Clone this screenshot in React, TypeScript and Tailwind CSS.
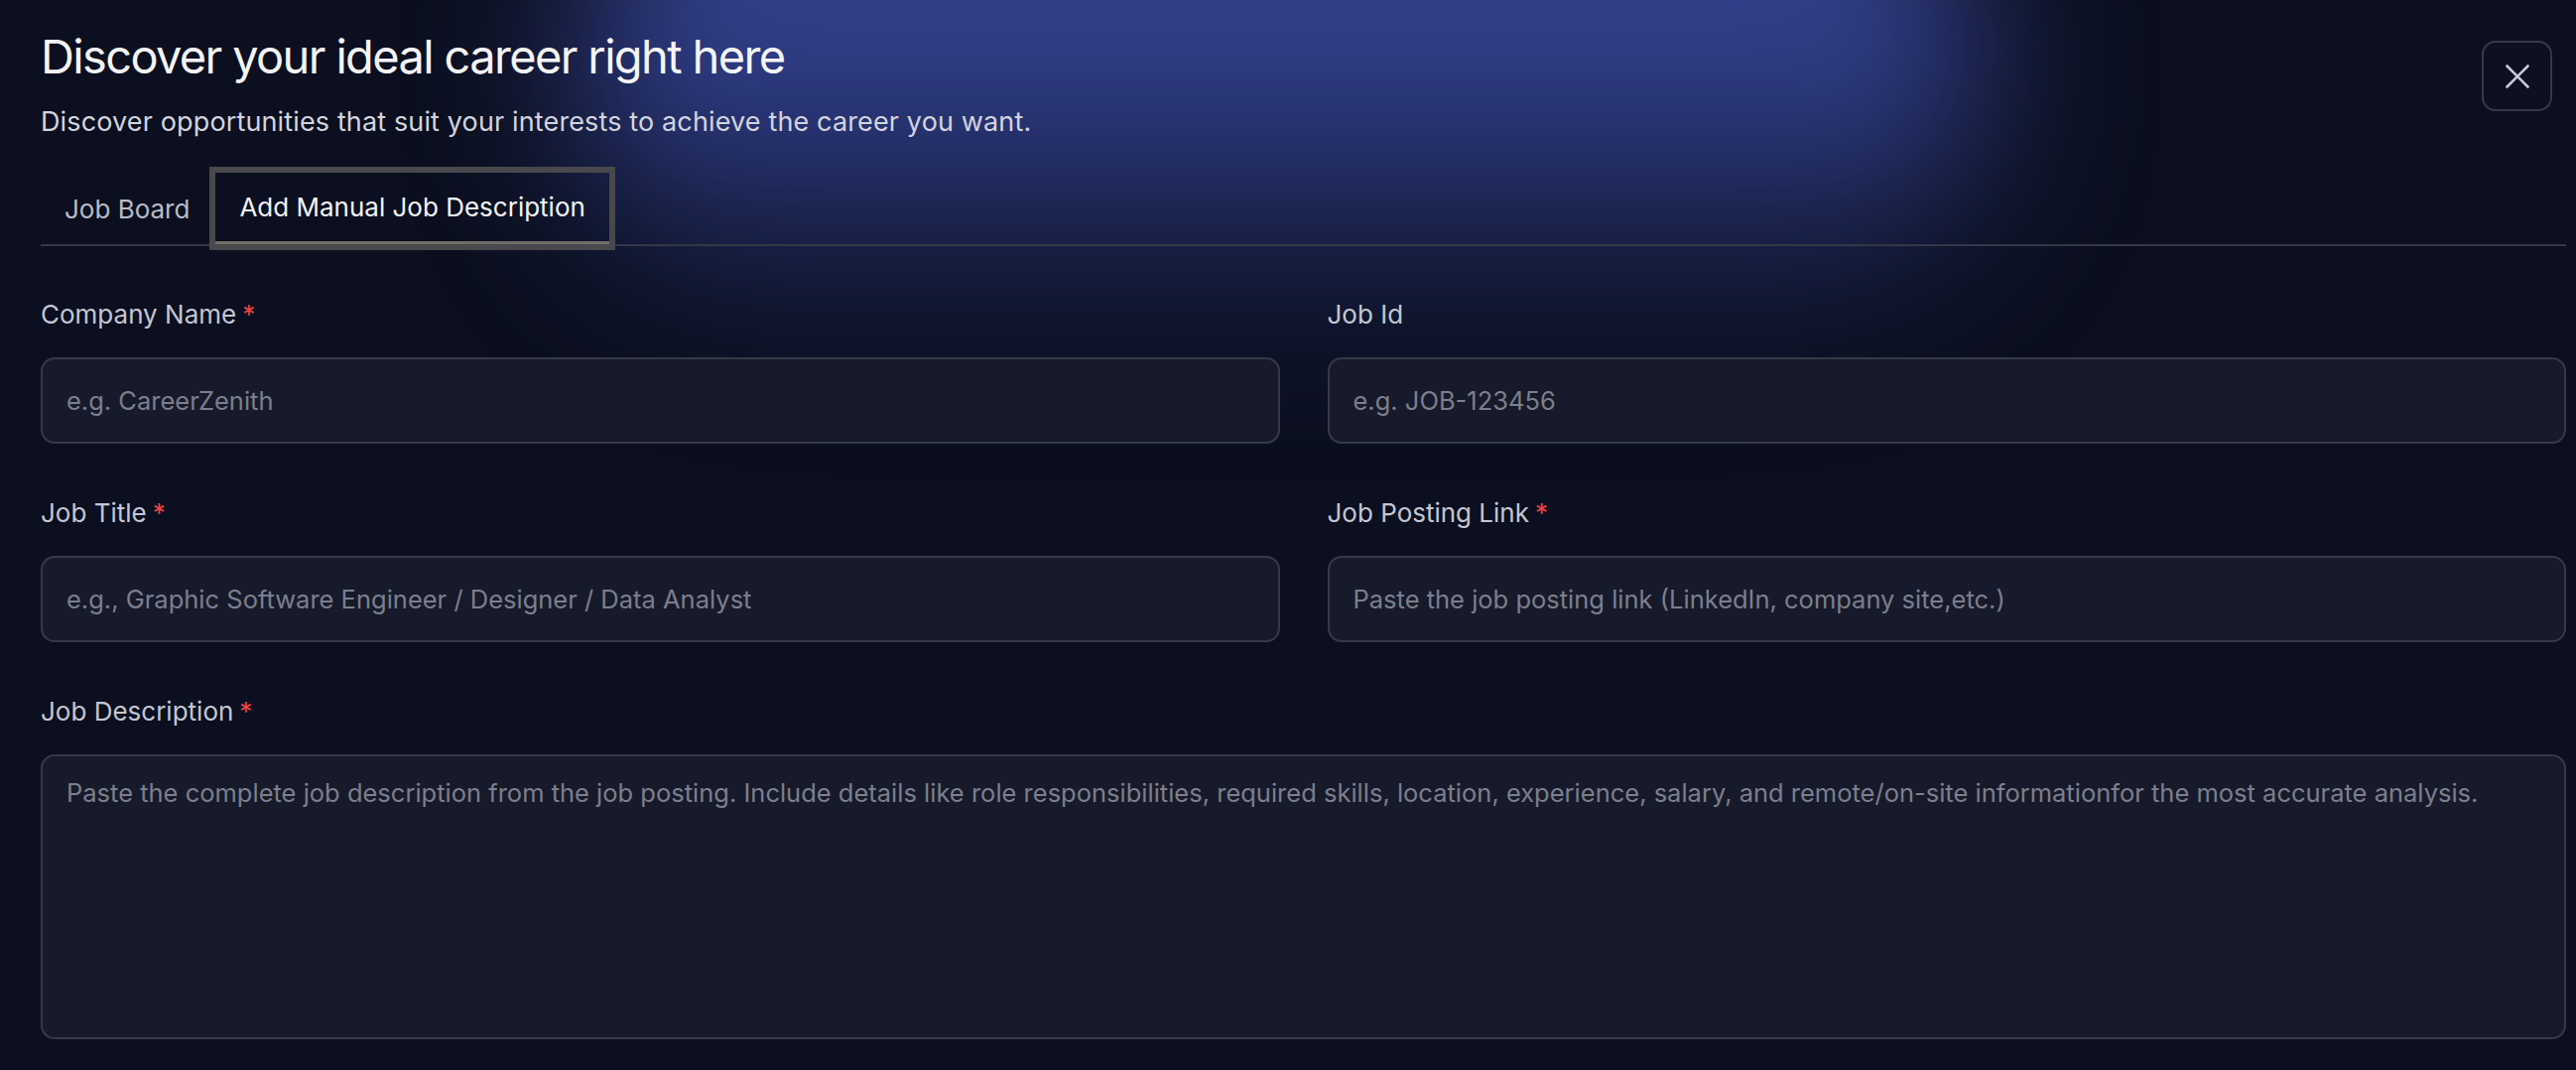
import { useState } from 'react';

const font = { fontFamily: 'Inter, "Noto Sans", sans-serif' };

type FieldProps = {
	label: string,
	placeholder: string,
	required?: boolean
};

const Label = ({ label, required }: { label: string, required?: boolean }) => (
	<label className="block text-[26px] leading-[32px] text-[#c4c6d3]">
		{label}
		{required && <span className="ml-[6px] text-[#ef4444]">*</span>}
	</label>
);

const Field = ({ label, placeholder, required }: FieldProps) => (
	<div className="flex flex-col gap-[27px]">
		<Label label={label} required={required} />
		<input placeholder={placeholder}
			className="h-[87px] w-full rounded-[14px] border-2 border-[#363947] bg-[#171a2a] px-[24px] text-[25.5px] text-[#e5e7ee] placeholder:text-[#7c7f8d] outline-none" />
	</div>
);

const TABS = ['Job Board', 'Add Manual Job Description'];

export default function App() {
	const [tab, setTab] = useState(1);

	return (
		<div className="relative min-h-[1078px] w-full overflow-hidden bg-[#0b0f1f]" style={font}>
			{/* blue glow behind the header */}
			<div className="pointer-events-none absolute left-[580px] top-[-180px] h-[520px] w-[1420px] rounded-[260px] bg-gradient-to-b from-[#3d4c9e] via-[#2e3c85] to-transparent blur-[80px]" />

			<div className="relative pl-[41px] pr-[10px] pt-[28px]">
				<div className="flex items-start justify-between">
					<div>
						<h1 className="text-[47px] leading-[58px] font-normal tracking-[-0.035em] text-[#f4f4f7]">Discover your ideal career right here</h1>
						<p className="mt-[21px] text-[27px] leading-[32px] tracking-[0.005em] text-[#d2d4de]">
							Discover opportunities that suit your interests to achieve the career you want.
						</p>
					</div>
					<button className="mr-[14px] mt-[13px] flex h-[71px] w-[71px] items-center justify-center rounded-[14px] border-2 border-[#363947] bg-[#0d1122]/60 text-[#c9cbd5]">
						<svg width="24" height="24" viewBox="0 0 24 24" fill="none" stroke="currentColor" strokeWidth="2.6" strokeLinecap="round">
							<path d="M1.5 1.5L22.5 22.5M22.5 1.5L1.5 22.5" />
						</svg>
					</button>
				</div>

				<div className="mt-[35px] flex items-end border-b-2 border-[#343746]">
					{TABS.map((t, i) => (
						<button key={t} onClick={() => setTab(i)}
							className={i === tab
								? 'ml-[2px] h-[72px] border-b-[3px] border-[#726d68] px-[24px] text-[26px] text-[#f3f3f6] ring-[6px] ring-[#48484d]'
								: 'h-[72px] px-[24px] text-[26px] text-[#b9bbc8]'}>
							{t}
						</button>
					))}
				</div>

				<div className="mt-[53px] grid grid-cols-2 gap-x-[48px] gap-y-[54px]">
					<Field label="Company Name" placeholder="e.g. CareerZenith" required />
					<Field label="Job Id" placeholder="e.g. JOB-123456" />
					<Field label="Job Title" placeholder="e.g., Graphic Software Engineer / Designer / Data Analyst" required />
					<Field label="Job Posting Link" placeholder="Paste the job posting link (LinkedIn, company site,etc.)" required />
					<div className="col-span-2 flex flex-col gap-[27px]">
						<Label label="Job Description" required />
						<textarea
							placeholder="Paste the complete job description from the job posting. Include details like role responsibilities, required skills, location, experience, salary, and remote/on-site informationfor the most accurate analysis."
							className="h-[287px] w-full resize-none rounded-[14px] border-2 border-[#363947] bg-[#171a2a] px-[24px] pt-[21px] text-[25.5px] leading-[32px] text-[#e5e7ee] placeholder:text-[#7c7f8d] outline-none" />
					</div>
				</div>
			</div>
		</div>
	);
}
